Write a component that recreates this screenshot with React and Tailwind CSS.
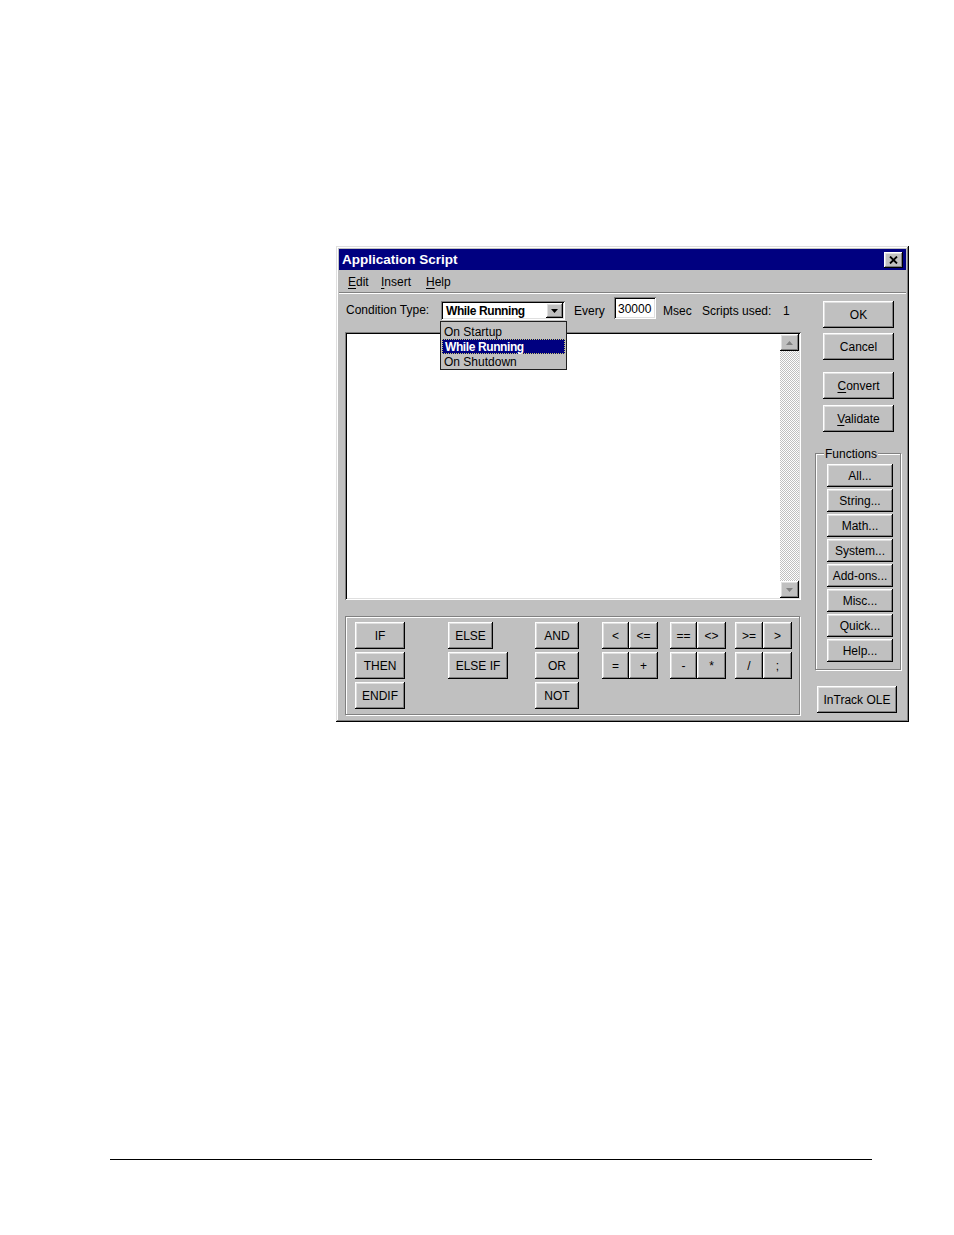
import React from "react";

const raised =
  "bg-[#c0c0c0] shadow-[inset_-1px_-1px_0_#000,inset_1px_1px_0_#fff,inset_-2px_-2px_0_#808080,inset_2px_2px_0_#dfdfdf]";
const sunken =
  "shadow-[inset_1px_1px_0_#808080,inset_-1px_-1px_0_#fff,inset_2px_2px_0_#000,inset_-2px_-2px_0_#dfdfdf]";
const etched = "border border-[#808080] shadow-[inset_1px_1px_0_#fff,1px_1px_0_#fff]";

function Btn({ className = "", children }) {
  return (
    <div className={`${raised} flex items-center justify-center pt-[1px] text-[12px] leading-none text-black ${className}`}>
      {children}
    </div>
  );
}

function U({ children }) {
  return <span className="underline underline-offset-[2px]">{children}</span>;
}

function Tri({ up }) {
  return (
    <svg width="7" height="4" viewBox="0 0 7 4">
      {up ? (
        <polygon points="0,4 7,4 3.5,0" fill="#808080" />
      ) : (
        <polygon points="0,0 7,0 3.5,4" fill="#808080" />
      )}
    </svg>
  );
}

export default function App() {
  return (
    <div className="w-full h-[1235px] bg-white font-['Liberation_Sans',Arial,sans-serif] text-black overflow-hidden">
      <div className="pt-[246px] pl-[336px]">
        <div className="w-[573px] h-[476px] bg-[#c0c0c0] p-[3px] flex flex-col shadow-[inset_-1px_-1px_0_#000,inset_1px_1px_0_#dfdfdf,inset_-2px_-2px_0_#808080,inset_2px_2px_0_#fff]">
          {/* Title bar */}
          <div className="h-[21px] bg-[#000080] flex items-center justify-between">
            <span className="ml-[3px] text-white font-bold text-[13.5px] leading-none">Application Script</span>
            <div className={`${raised} mr-[3px] w-[19px] h-[16px] flex items-center justify-center`}>
              <svg width="9" height="8" viewBox="0 0 9 8">
                <path d="M1 0.5 L8 7.5 M8 0.5 L1 7.5" stroke="#000" strokeWidth="1.8" />
              </svg>
            </div>
          </div>
          {/* Menu */}
          <div className="mt-[1px] h-[21px] flex items-center text-[12px] leading-none">
            <span className="ml-[9px] w-[33px]"><U>E</U>dit</span>
            <span className="w-[45px]"><U>I</U>nsert</span>
            <span><U>H</U>elp</span>
          </div>
          <div className="h-[2px] border-t border-[#808080] border-b border-b-white" />
          {/* Content */}
          <div className="flex">
            {/* Left column */}
            <div className="ml-[6px] w-[456px] flex flex-col">
              <div className="mt-[2px] h-[24px] flex items-start text-[12px] leading-[14px]">
                <span className="ml-[1px] w-[95px] mt-[7px]">Condition Type:</span>
                <div className={`relative mt-[5px] w-[124px] h-[19px] bg-white ${sunken} flex items-center`}>
                  <span className="ml-[5px] pt-[1px] font-bold tracking-[-0.4px] flex-1">While Running</span>
                  <div className={`${raised} mr-[2px] w-[17px] h-[15px] flex items-center justify-center`}>
                    <svg width="7" height="4" viewBox="0 0 7 4">
                      <polygon points="0,0 7,0 3.5,4" fill="#000" />
                    </svg>
                  </div>
                  <div className="absolute left-[-1px] top-[20px] w-[127px] h-[49px] bg-[#c0c0c0] border border-[#202020] z-10 pt-[2px] flex flex-col">
                    <div className="h-[15px] pl-[3px] leading-[16px]">On Startup</div>
                    <div className="h-[15px] mx-[1px] pl-[2px] bg-[#000080] text-white font-bold tracking-[-0.4px] leading-[14px] border border-dotted border-[#c8c870]">
                      While Running
                    </div>
                    <div className="h-[15px] pl-[3px] leading-[16px]">On Shutdown</div>
                  </div>
                </div>
                <span className="ml-[9px] w-[40px] mt-[8px]">Every</span>
                <div className={`mt-[1px] w-[42px] h-[22px] bg-white ${sunken} flex items-center`}>
                  <span className="ml-[4px] pt-[1px]">30000</span>
                </div>
                <span className="ml-[7px] w-[39px] mt-[8px]">Msec</span>
                <span className="w-[80px] mt-[8px]">Scripts used:</span>
                <span className="ml-[1px] mt-[8px]">1</span>
              </div>
              {/* Text area */}
              <div className={`mt-[12px] h-[268px] w-[456px] bg-white ${sunken} flex justify-end py-[2px] pr-[2px]`}>
                <div className="w-[19px] h-full flex flex-col bg-[repeating-conic-gradient(#fff_0_25%,#c0c0c0_0_50%)] bg-[length:2px_2px]">
                  <div className={`${raised} h-[17px] flex items-center justify-center`}>
                    <Tri up />
                  </div>
                  <div className="flex-1" />
                  <div className={`${raised} h-[17px] flex items-center justify-center`}>
                    <Tri />
                  </div>
                </div>
              </div>
              {/* Bottom panel */}
              <div className={`mt-[16px] h-[99px] w-[455px] ${etched} flex items-start pl-[9px] pt-[5px]`}>
                <div className="w-[50px] flex flex-col gap-[3px]">
                  <Btn className="h-[27px] w-[50px]">IF</Btn>
                  <Btn className="h-[27px] w-[50px]">THEN</Btn>
                  <Btn className="h-[27px] w-[50px]">ENDIF</Btn>
                </div>
                <div className="ml-[43px] w-[60px] flex flex-col gap-[3px]">
                  <Btn className="h-[27px] w-[45px]">ELSE</Btn>
                  <Btn className="h-[27px] w-[60px]">ELSE IF</Btn>
                </div>
                <div className="ml-[27px] w-[44px] flex flex-col gap-[3px]">
                  <Btn className="h-[27px] w-[44px]">AND</Btn>
                  <Btn className="h-[27px] w-[44px]">OR</Btn>
                  <Btn className="h-[27px] w-[44px]">NOT</Btn>
                </div>
                <div className="ml-[23px] grid grid-cols-[27px_29px] gap-y-[3px]">
                  <Btn className="h-[27px]">&lt;</Btn>
                  <Btn className="h-[27px]">&lt;=</Btn>
                  <Btn className="h-[27px]">=</Btn>
                  <Btn className="h-[27px]">+</Btn>
                </div>
                <div className="ml-[12px] grid grid-cols-[27px_29px] gap-y-[3px]">
                  <Btn className="h-[27px]">==</Btn>
                  <Btn className="h-[27px]">&lt;&gt;</Btn>
                  <Btn className="h-[27px]">-</Btn>
                  <Btn className="h-[27px] items-start pt-[8px] text-[10px]">*</Btn>
                </div>
                <div className="ml-[9px] grid grid-cols-[28px_29px] gap-y-[3px]">
                  <Btn className="h-[27px]">&gt;=</Btn>
                  <Btn className="h-[27px]">&gt;</Btn>
                  <Btn className="h-[27px]">/</Btn>
                  <Btn className="h-[27px]">;</Btn>
                </div>
              </div>
            </div>
            {/* Right column */}
            <div className="ml-[14px] w-[86px] flex flex-col">
              <Btn className="ml-[8px] mt-[7px] w-[71px] h-[27px]">OK</Btn>
              <Btn className="ml-[8px] mt-[5px] w-[71px] h-[27px]">Cancel</Btn>
              <Btn className="ml-[8px] mt-[12px] w-[71px] h-[27px]"><span><U>C</U>onvert</span></Btn>
              <Btn className="ml-[8px] mt-[6px] w-[71px] h-[27px]"><span><U>V</U>alidate</span></Btn>
              <div className={`relative mt-[21px] h-[217px] w-[86px] ${etched} pt-[10px] pl-[11px] flex flex-col gap-[2px]`}>
                <span className="absolute left-[8px] top-[-7px] px-[1px] bg-[#c0c0c0] text-[12px] leading-[14px]">Functions</span>
                <Btn className="w-[66px] h-[23px]">All...</Btn>
                <Btn className="w-[66px] h-[23px]">String...</Btn>
                <Btn className="w-[66px] h-[23px]">Math...</Btn>
                <Btn className="w-[66px] h-[23px]">System...</Btn>
                <Btn className="w-[66px] h-[23px]">Add-ons...</Btn>
                <Btn className="w-[66px] h-[23px]">Misc...</Btn>
                <Btn className="w-[66px] h-[23px]">Quick...</Btn>
                <Btn className="w-[66px] h-[23px]">Help...</Btn>
              </div>
              <Btn className="ml-[2px] mt-[16px] w-[80px] h-[27px]">InTrack OLE</Btn>
            </div>
          </div>
        </div>
      </div>
      <div className="ml-[110px] mt-[437px] w-[762px] h-[1px] bg-black" />
    </div>
  );
}
